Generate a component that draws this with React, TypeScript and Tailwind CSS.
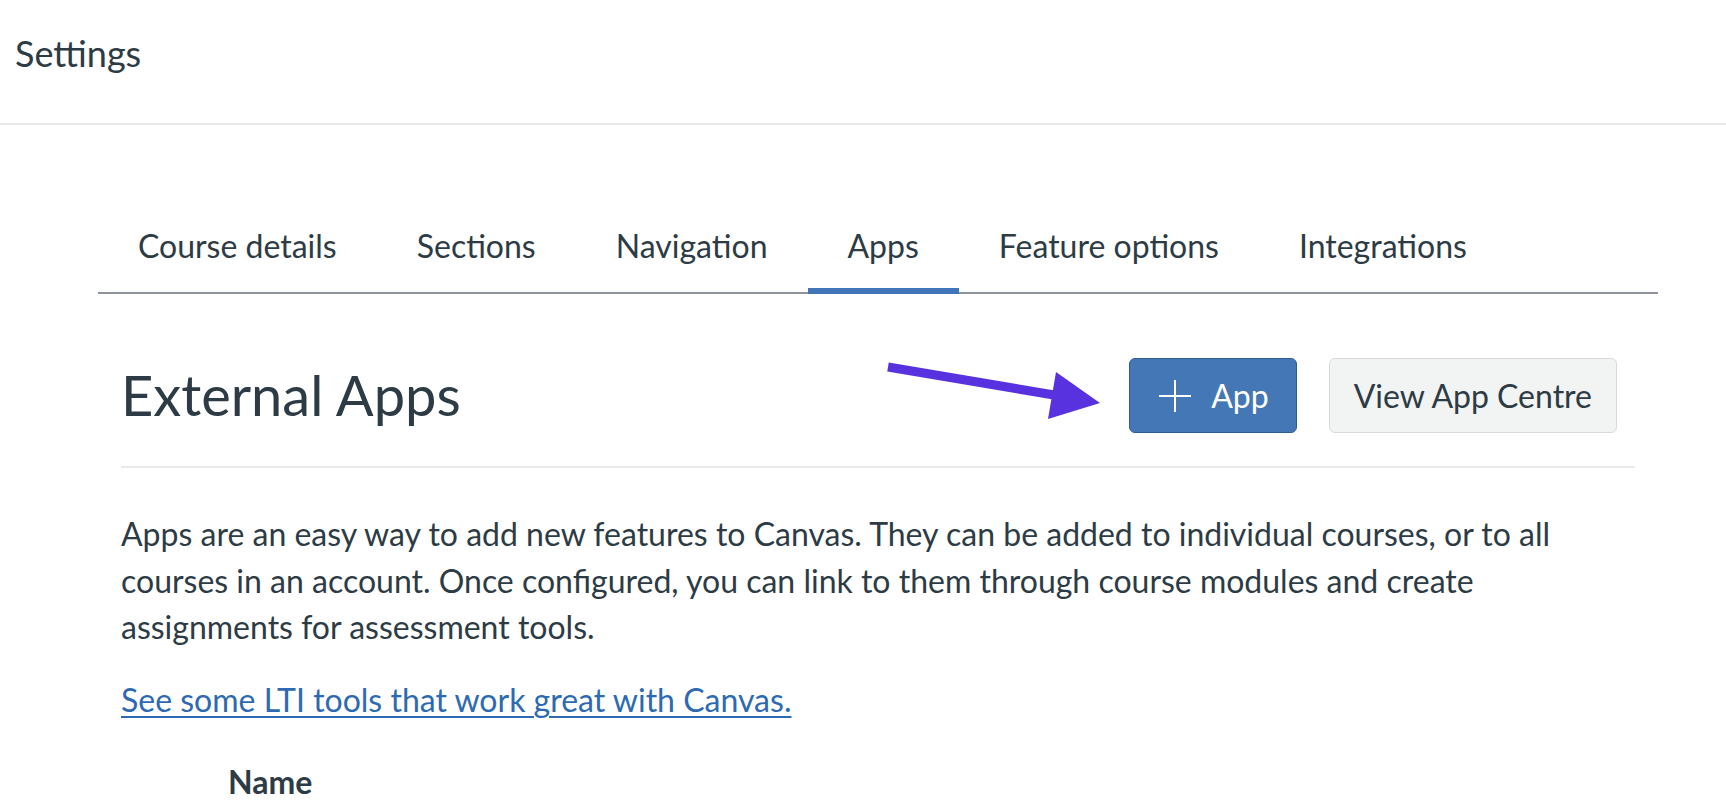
import { ReactNode } from 'react';

const tabs = ['Course details', 'Sections', 'Navigation', 'Apps', 'Feature options', 'Integrations'];

function Tab({ label, active }: { label: string; active?: boolean }) {
  return (
    <div
      className={`-mb-[2px] px-[40px] pt-[20px] pb-[26px] text-[32px] leading-none border-b-[6px] ${
        active ? 'border-[#4076b7]' : 'border-transparent'
      }`}
    >
      {label}
    </div>
  );
}

function Button({ children, primary }: { children: ReactNode; primary?: boolean }) {
  return (
    <button
      className={`h-[75px] flex items-center rounded-[6px] border text-[32px] leading-none ${
        primary
          ? 'bg-[#4477b6] border-[#2e5c8f] text-white pl-[29px] pr-[27px] gap-[20px]'
          : 'bg-[#f2f3f3] border-[#d7dadd] text-[#2d3b45] px-[24px]'
      }`}
    >
      {children}
    </button>
  );
}

export default function App() {
  return (
    <div
      className="relative h-[806px] w-full overflow-hidden bg-white text-[#2d3b45]"
      style={{ fontFamily: 'Lato, "Noto Sans", sans-serif' }}
    >
      {/* page header */}
      <header className="h-[125px] border-b-2 border-[#e8e8e8] pl-[15px] pt-[35px]">
        <h1 className="text-[36px] leading-none">Settings</h1>
      </header>

      <main className="ml-[98px] w-[1560px]">
        <nav className="mt-[85px] flex border-b-2 border-[#8e939b]">
          {tabs.map((t) => (
            <Tab key={t} label={t} active={t === 'Apps'} />
          ))}
        </nav>

        <section className="px-[23px]">
          <div className="mt-[64px] flex items-start justify-between border-b-2 border-[#e8eaec] pb-[33px]">
            <h2 className="mt-[9px] text-[56px] leading-none">External Apps</h2>
            <div className="mr-[18px] flex gap-[32px]">
              <Button primary>
                <svg width="32" height="32" viewBox="0 0 32 32" fill="none" stroke="currentColor" strokeWidth="2">
                  <path d="M16 0v32M0 16h32" />
                </svg>
                <span>App</span>
              </Button>
              <Button>View App Centre</Button>
            </div>
          </div>

          <p className="mt-[43px] w-[1514px] text-[32px] leading-[46.5px]">
            Apps are an easy way to add new features to Canvas. They can be added to individual courses, or to all
            <br />
            courses in an account. Once configured, you can link to them through course modules and create
            <br />
            assignments for assessment tools.
          </p>

          <a
            href="#"
            className="mt-[25px] block w-fit text-[32px] leading-[47.5px] text-[#2d6ab2] underline decoration-2 underline-offset-[4px]"
          >
            See some LTI tools that work great with Canvas.
          </a>

          <div className="mt-[35px] pl-[107px] text-[32px] font-bold leading-[47.5px]">Name</div>
        </section>
      </main>

      {/* annotation arrow */}
      <svg className="absolute left-[880px] top-[355px]" width="230" height="75" viewBox="0 0 230 75">
        <line x1="8" y1="12" x2="174" y2="40" stroke="#5932e0" strokeWidth="9" />
        <polygon points="176,17 220,48 168,64" fill="#5932e0" />
      </svg>
    </div>
  );
}
